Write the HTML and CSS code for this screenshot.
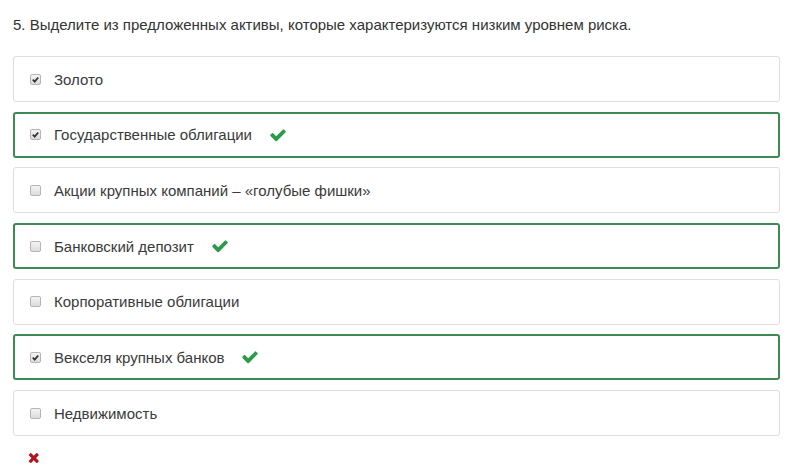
FILE: index.html
```html
<!DOCTYPE html>
<html lang="ru">
<head>
    <meta charset="UTF-8">
    <title>Вопрос 5</title>
    <link rel="stylesheet" href="styles.css">
</head>
<body>
    <div class="question">
        <p class="question-text">5. Выделите из предложенных активы, которые характеризуются низким уровнем риска.</p>

        <div class="answers">
            <div class="answer">
                <span class="box checked"><svg viewBox="0 0 10 10"><path d="M2 5.2 L4.1 7.3 L8 2.8" /></svg></span>
                <span class="label">Золото</span>
            </div>
            <div class="answer correct">
                <span class="box checked"><svg viewBox="0 0 10 10"><path d="M2 5.2 L4.1 7.3 L8 2.8" /></svg></span>
                <span class="label">Государственные облигации</span>
                <svg class="mark" viewBox="0 0 1792 1792"><path d="M1671 566q0 40-28 68l-724 724-136 136q-28 28-68 28t-68-28l-136-136-362-362q-28-28-28-68t28-68l136-136q28-28 68-28t68 28l294 295 656-657q28-28 68-28t68 28l136 136q28 28 28 68z"/></svg>
            </div>
            <div class="answer">
                <span class="box"></span>
                <span class="label">Акции крупных компаний – «голубые фишки»</span>
            </div>
            <div class="answer correct">
                <span class="box"></span>
                <span class="label">Банковский депозит</span>
                <svg class="mark" viewBox="0 0 1792 1792"><path d="M1671 566q0 40-28 68l-724 724-136 136q-28 28-68 28t-68-28l-136-136-362-362q-28-28-28-68t28-68l136-136q28-28 68-28t68 28l294 295 656-657q28-28 68-28t68 28l136 136q28 28 28 68z"/></svg>
            </div>
            <div class="answer">
                <span class="box"></span>
                <span class="label">Корпоративные облигации</span>
            </div>
            <div class="answer correct">
                <span class="box checked"><svg viewBox="0 0 10 10"><path d="M2 5.2 L4.1 7.3 L8 2.8" /></svg></span>
                <span class="label">Векселя крупных банков</span>
                <svg class="mark" viewBox="0 0 1792 1792"><path d="M1671 566q0 40-28 68l-724 724-136 136q-28 28-68 28t-68-28l-136-136-362-362q-28-28-28-68t28-68l136-136q28-28 68-28t68 28l294 295 656-657q28-28 68-28t68 28l136 136q28 28 28 68z"/></svg>
            </div>
            <div class="answer">
                <span class="box"></span>
                <span class="label">Недвижимость</span>
            </div>
        </div>

        <div class="result">
            <svg class="wrong" viewBox="0 0 1408 1792"><path d="M1490 1322q0 40-28 68l-136 136q-28 28-68 28t-68-28l-294-294-294 294q-28 28-68 28t-68-28l-136-136q-28-28-28-68t28-68l294-294-294-294q-28-28-28-68t28-68l136-136q28-28 68-28t68 28l294 294 294-294q28-28 68-28t68 28l136 136q28 28 28 68t-28 68l-294 294 294 294q28 28 28 68z" transform="translate(-100 0)"/></svg>
        </div>
    </div>
</body>
</html>
```

FILE: styles.css
```css
* {
    margin: 0;
    padding: 0;
    box-sizing: border-box;
}

body {
    background-color: #fff;
    font-family: 'Liberation Sans', Arial, sans-serif;
    color: #333;
}

.question {
    padding: 15px 20px 0 13px;
}

.question-text {
    font-size: 15px;
    line-height: 20px;
    color: #333;
    margin-bottom: 21px;
}

.answers {
    display: flex;
    flex-direction: column;
    gap: 9.7px;
    width: 767px;
}

.answer {
    display: flex;
    align-items: center;
    height: 46px;
    padding-left: 16px;
    border: 1px solid #dedede;
    border-radius: 3px;
    font-size: 15px;
}

.answer.correct {
    border: 2px solid #3e8a55;
    padding-left: 15px;
}

.box {
    width: 11px;
    height: 11px;
    border: 1px solid #b5b5b5;
    border-radius: 2px;
    background: linear-gradient(#f4f4f4, #dcdcdc);
    margin-right: 13px;
    display: flex;
    align-items: center;
    justify-content: center;
}

.box svg {
    width: 9px;
    height: 9px;
}

.box svg path {
    fill: none;
    stroke: #333;
    stroke-width: 2;
}

.label {
    color: #3a3a3a;
}

.mark {
    width: 18px;
    height: 18px;
    margin-left: 17px;
    fill: #2c9a4a;
}

.result {
    padding: 14px 0 0 13px;
}

.wrong {
    width: 14px;
    height: 15px;
    fill: #b0141c;
    display: block;
}
```
